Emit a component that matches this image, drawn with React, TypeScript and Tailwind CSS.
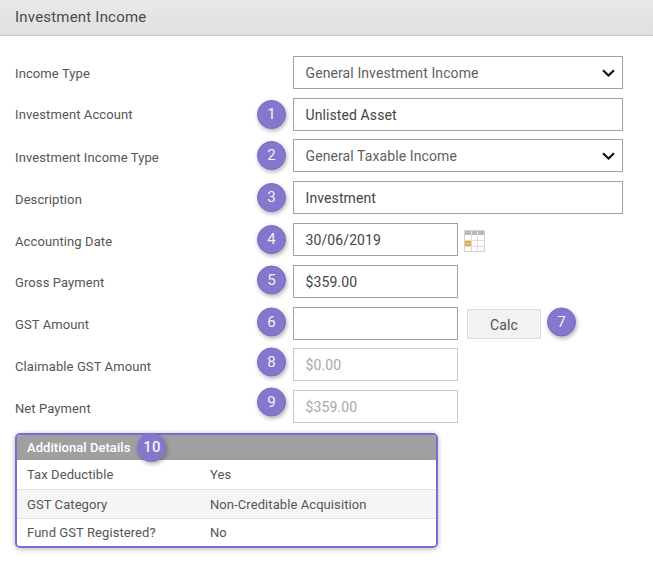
const font = "font-['Roboto',sans-serif]";

function Badge({ n, className = '' }: { n: number; className?: string }) {
    return (
        <div className={`flex h-[29px] w-[29px] shrink-0 items-center justify-center rounded-full border border-[#7a69cf] bg-[#8577cc] pb-[1px] text-[15px] text-[#f3f1fb] shadow-[1px_2px_4px_rgba(0,0,0,0.3)] ${className}`}>
            {n}
        </div>
    );
}

function Field({ value, wide, select, disabled }: { value: string; wide?: boolean; select?: boolean; disabled?: boolean }) {
    return (
        <div
            className={`flex h-[33px] items-center justify-between border pl-[11.5px] pr-[7px] text-[14px] tracking-[0.1px] ${wide ? 'w-[330px]' : 'w-[165px]'} ${
                disabled ? 'border-[#c9c9c9] text-[#a8a8a8]' : 'border-[#a3a3a3]'
            } ${select ? 'text-[#5f5f5f]' : disabled ? '' : 'text-[#444444]'}`}
        >
            <span className="pt-[1px]">{value}</span>
            {select && (
                <svg width="13" height="8" viewBox="0 0 13 8" fill="none" stroke="#111111" strokeWidth="2.2">
                    <path d="M1 1.2l5.5 5.3L12 1.2" />
                </svg>
            )}
        </div>
    );
}

function CalendarIcon() {
    return (
        <svg width="21" height="22" viewBox="0 0 21 22" className="ml-[6px] mt-[3px]">
            <rect x="0.5" y="0.5" width="20" height="21" fill="#ffffff" stroke="#d2d2d2" />
            <rect x="1" y="1" width="19" height="4" fill="#b9b9b9" />
            <path d="M7.5 1v20M13.5 1v20M1 10.5h19M1 16.5h19" stroke="#dddddd" strokeWidth="1" />
            <path d="M7.5 1v4M13.5 1v4" stroke="#e8e8e8" strokeWidth="1" />
            <rect x="1" y="11" width="6" height="5" fill="#e0b33f" />
            <rect x="2" y="13" width="3" height="1" fill="#f3dc98" />
        </svg>
    );
}

function Row({
    label,
    badge,
    className = '',
    labelClass = 'top-[1px]',
    badgeClass = '',
    children,
}: {
    label: string;
    badge?: number;
    className?: string;
    labelClass?: string;
    badgeClass?: string;
    children: React.ReactNode;
}) {
    return (
        <div className={`flex h-[33px] items-center pl-[15px] ${className}`}>
            <div className={`relative w-[242px] text-[13px] tracking-[0.1px] text-[#555555] ${labelClass}`}>{label}</div>
            <div className="w-[36px]">{badge && <Badge n={badge} className={badgeClass} />}</div>
            {children}
        </div>
    );
}

function DetailRow({ label, value, className }: { label: string; value: string; className: string }) {
    return (
        <div className={`flex items-center pl-[10px] text-[13px] tracking-[0.08px] text-[#555555] ${className}`}>
            <span className="w-[183px]">{label}</span>
            <span>{value}</span>
        </div>
    );
}

export default function App() {
    return (
        <div className={`h-[572px] w-[653px] overflow-hidden bg-white ${font}`}>
            <div className="flex h-[36px] items-center border-b border-[#c9c9c9] bg-gradient-to-b from-[#e9e9e9] to-[#e0e0e0] pl-[15px] text-[15px] tracking-[0.2px] text-[#4a4a4a]">
                Investment Income
            </div>

            <div className="pt-[20px]">
                <Row label="Income Type">
                    <Field value="General Investment Income" wide select />
                </Row>
                <Row label="Investment Account" badge={1} className="mt-[9px]" labelClass="top-0">
                    <Field value="Unlisted Asset" wide />
                </Row>
                <Row label="Investment Income Type" badge={2} className="mt-[8px]" labelClass="top-[2px]">
                    <Field value="General Taxable Income" wide select />
                </Row>
                <Row label="Description" badge={3} className="mt-[9px]" labelClass="top-[2px]">
                    <Field value="Investment" wide />
                </Row>
                <Row label="Accounting Date" badge={4} className="mt-[9px]" labelClass="top-[2px]">
                    <Field value="30/06/2019" />
                    <CalendarIcon />
                </Row>
                <Row label="Gross Payment" badge={5} className="mt-[9px]" badgeClass="-translate-y-[1.5px]">
                    <Field value="$359.00" />
                </Row>
                <Row label="GST Amount" badge={6} className="mt-[9px]" badgeClass="-translate-y-[1.5px]">
                    <Field value="" />
                    <button className="ml-[9px] mt-[1px] h-[30px] w-[74px] border border-[#dcdcdc] bg-[#f2f2f2] pt-[2px] text-[14px] tracking-[0.1px] text-[#505050]">Calc</button>
                    <Badge n={7} className="ml-[6px] -translate-y-[1.5px]" />
                </Row>
                <Row label="Claimable GST Amount" badge={8} className="mt-[8px]" labelClass="top-[2px]" badgeClass="-translate-y-[2.5px]">
                    <Field value="$0.00" disabled />
                </Row>
                <Row label="Net Payment" badge={9} className="mt-[9px]" labelClass="top-[2px]" badgeClass="-translate-y-[4.5px]">
                    <Field value="$359.00" disabled />
                </Row>
            </div>

            <div className="ml-[15px] mt-[10px] w-[423px] rounded-[5px] border-2 border-[#7c6bd3] shadow-[0_1px_5px_rgba(0,0,0,0.3)]">
                <div className="flex h-[25px] items-center rounded-t-[3px] bg-[#a0a0a0] pl-[10px] text-[13px] font-medium tracking-[0.05px] text-white">
                    <span>Additional Details</span>
                    <Badge n={10} className="ml-[7px] border-0 bg-[#7b6bc6]" />
                </div>
                <DetailRow label="Tax Deductible" value="Yes" className="h-[30px] border-b border-[#e2e2e2] bg-white" />
                <DetailRow label="GST Category" value="Non-Creditable Acquisition" className="h-[29px] border-b border-[#e2e2e2] bg-[#f5f5f5] pt-[1px]" />
                <DetailRow label="Fund GST Registered?" value="No" className="h-[27px] rounded-b-[3px] bg-white pt-[1px]" />
            </div>
        </div>
    );
}
